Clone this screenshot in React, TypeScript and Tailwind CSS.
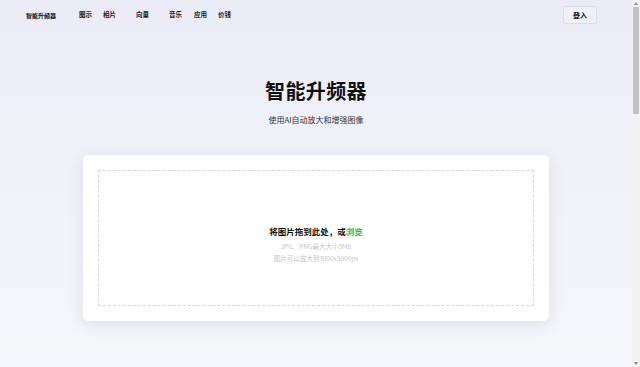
export default function App() {
  const links = [
    { label: '图示', cls: 'ml-[23px]' },
    { label: '相片', cls: 'ml-[11px]' },
    { label: '向量', cls: 'ml-[20px]' },
    { label: '音乐', cls: 'ml-[20px]' },
    { label: '应用', cls: 'ml-[12px]' },
    { label: '价钱', cls: 'ml-[11px]' },
  ]

  return (
    <div className="flex h-[367px] w-[640px] overflow-hidden font-['Noto_Sans_CJK_SC','Noto_Sans',sans-serif] text-[#111]">
      <div className="flex flex-1 flex-col bg-gradient-to-b from-[#ebebf8] via-[#f1f2f9] to-[#f6f7fb]">
        {/* Top nav */}
        <header className="flex h-[30px] items-center pl-[26px] pr-[35px]">
          <span className="text-[6px] font-bold">智能升频器</span>
          <nav className="flex items-center">
            {links.map((l) => (
              <a key={l.label} className={`${l.cls} text-[6.5px] font-bold text-[#222]`}>
                {l.label}
              </a>
            ))}
          </nav>
          <button className="ml-auto h-[18px] w-[34px] rounded-[3px] border border-[#dcdce8] bg-[#f0f0f8] text-[7px] font-semibold text-[#222]">
            登入
          </button>
        </header>

        {/* Hero */}
        <section className="flex flex-col items-center pt-[47px]">
          <h1 className="text-[20px] font-bold leading-[28px] tracking-[0.4px]">智能升频器</h1>
          <p className="mt-[9px] text-[8px] leading-[12px] text-[#333]">使用AI自动放大和增强图像</p>
        </section>

        {/* Upload card */}
        <section className="mx-[83px] mt-[29px] h-[166px] rounded-[5px] bg-white p-[15px] shadow-[0_4px_16px_rgba(60,60,100,0.12)]">
          <div className="flex h-full flex-col items-center justify-center border border-dashed border-[#d4d4dc] pt-[12px]">
            <p className="text-[8.5px] font-bold leading-[12px]">
              将图片拖到此处，或<span className="text-[#3cb34a]">浏览</span>
            </p>
            <p className="mt-[5px] text-[6.5px] leading-[9px] text-[#c4c4c8]">JPG、PNG最大大小5Mb</p>
            <p className="mt-[3px] text-[6.5px] leading-[9px] text-[#c4c4c8]">图片可以放大到3000x3000px</p>
          </div>
        </section>
      </div>

      {/* Scrollbar */}
      <div className="flex w-[8px] flex-col items-center bg-[#f1f1f1]">
        <div className="mt-[2px] h-0 w-0 border-x-[2px] border-b-[3px] border-x-transparent border-b-[#888]" />
        <div className="mt-[2px] h-[107px] w-[6px] rounded-[1px] bg-[#c1c1c1]" />
        <div className="mt-auto mb-[2px] h-0 w-0 border-x-[2px] border-t-[3px] border-x-transparent border-t-[#888]" />
      </div>
    </div>
  )
}
